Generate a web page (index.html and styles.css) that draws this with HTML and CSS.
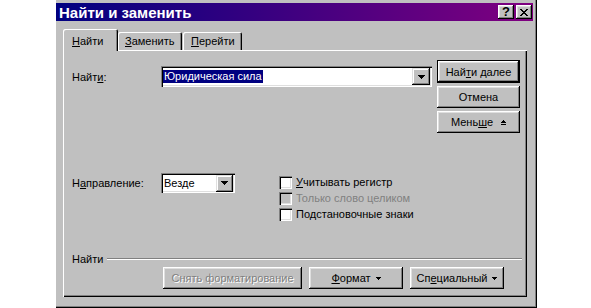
FILE: index.html
```html
<!DOCTYPE html>
<html lang="ru">
<head>
<meta charset="utf-8">
<title>Найти и заменить</title>
<link rel="stylesheet" href="styles.css">
</head>
<body>
<div class="window">
  <div class="titlebar">
    <span class="title">Найти и заменить</span>
    <div class="tb-btns">
      <span class="tb-btn help">?</span>
      <span class="tb-btn close"><svg width="8" height="7" viewBox="0 0 8 7"><path d="M0 0h2v1H0zM6 0h2v1H6zM1 1h2v1H1zM5 1h2v1H5zM2 2h4v1H2zM3 3h2v1H3zM2 4h4v1H2zM1 5h2v1H1zM5 5h2v1H5zM0 6h2v1H0zM6 6h2v1H6z" fill="#000"/></svg></span>
    </div>
  </div>
  <div class="tabs">
    <div class="tab active"><span class="u">Н</span>айти</div>
    <div class="tab t2"><span class="u">З</span>аменить</div>
    <div class="tab t3"><span class="u">П</span>ерейти</div>
  </div>
  <div class="panel">
    <div class="top">
      <div class="find-row">
        <span class="lbl">Найт<span class="u">и</span>:</span>
        <div class="combo">
          <span class="sel">Юридическая сила</span>
          <span class="drop wide"><svg width="7" height="4" viewBox="0 0 7 4"><path d="M0 0h7v1H0zM1 1h5v1H1zM2 2h3v1H2zM3 3h1v1H3z" fill="#000"/></svg></span>
        </div>
      </div>
      <div class="side">
        <div class="btn default">Най<span class="u">т</span>и далее</div>
        <div class="btn">Отмена</div>
        <div class="btn">Мень<span class="u">ш</span>е<svg class="less" width="5" height="5" viewBox="0 0 5 5"><path d="M2 0h1v1H2zM1 1h3v1H1zM0 2h5v1H0zM0 4h5v1H0z" fill="#000"/></svg></div>
      </div>
    </div>
    <div class="options">
      <div class="dir">
        <span class="lbl">Н<span class="u">а</span>правление:</span>
        <div class="select">
          <span>Везде</span>
          <span class="drop"><svg width="7" height="4" viewBox="0 0 7 4"><path d="M0 0h7v1H0zM1 1h5v1H1zM2 2h3v1H2zM3 3h1v1H3z" fill="#000"/></svg></span>
        </div>
      </div>
      <div class="checks">
        <div class="chk"><span class="box"></span><span><span class="u">У</span>читывать регистр</span></div>
        <div class="chk disabled"><span class="box"></span><span>Только слово целиком</span></div>
        <div class="chk"><span class="box"></span><span>По<span class="u">д</span>становочные знаки</span></div>
      </div>
    </div>
    <div class="group">
      <div class="sep"><span>Найти</span><span class="line"></span></div>
      <div class="row-btns">
        <div class="btn b-clear disabled">Снять форматирование</div>
        <div class="btn b-fmt"><span class="u">Ф</span>ормат<svg class="tri" width="5" height="3" viewBox="0 0 5 3"><path d="M0 0h5v1H0zM1 1h3v1H1zM2 2h1v1H2z" fill="#000"/></svg></div>
        <div class="btn b-spec">Сп<span class="u">е</span>циальный<svg class="tri" width="5" height="3" viewBox="0 0 5 3"><path d="M0 0h5v1H0zM1 1h3v1H1zM2 2h1v1H2z" fill="#000"/></svg></div>
      </div>
    </div>
  </div>
</div>
</body>
</html>
```
FILE: styles.css
```css
* { box-sizing: border-box; }
body {
  margin: 0;
  background: #fff;
  font: 11px "Liberation Sans", Arial, sans-serif;
  color: #000;
}
.u { text-decoration: underline; }
.window {
  margin-left: 56px;
  width: 481px;
  height: 308px;
  background: #c0c0c0;
  padding-top: 3px;
  box-shadow: inset -1px -1px #000, inset -2px -2px #808080;
}
.titlebar {
  width: 477px;
  height: 18px;
  background: linear-gradient(90deg, #000080, #800080);
  display: flex;
  align-items: center;
}
.title {
  flex: 1;
  color: #fff;
  font-weight: bold;
  font-size: 15px;
  padding-left: 3px;
  white-space: nowrap;
}
.tb-btns { display: flex; gap: 2px; margin-right: 1px; }
.tb-btn {
  width: 16px;
  height: 14px;
  background: #c0c0c0;
  box-shadow: inset -1px -1px #000, inset 1px 1px #fff, inset -2px -2px #808080, inset 2px 2px #dfdfdf;
  display: flex;
  align-items: center;
  justify-content: center;
}
.help { font-weight: bold; font-size: 13px; line-height: 14px; }
.tabs {
  display: flex;
  align-items: flex-end;
  height: 29px;
  padding-left: 7px;
}
.tab {
  height: 18px;
  padding: 3px 0 0 7px;
  background: #c0c0c0;
  box-shadow: inset 1px 1px #fff, inset -1px 0 #000, inset -2px 0 #808080;
  border-radius: 2px 2px 0 0;
  white-space: nowrap;
}
.tab.active {
  width: 55px;
  height: 22px;
  padding: 6px 0 0 9px;
  margin-bottom: -1px;
  position: relative;
  z-index: 1;
}
.t2 { width: 64px; }
.t3 { width: 59px; margin-left: 1px; padding-left: 8px; }
.panel {
  margin-left: 7px;
  width: 464px;
  height: 247px;
  box-shadow: inset 1px 1px #fff, inset -1px -1px #000, inset -2px -2px #808080;
  display: flex;
  flex-direction: column;
  padding: 10px 7px 8px 9px;
}
.top { display: flex; justify-content: space-between; }
.find-row { display: flex; align-items: center; margin-top: 6px; height: 21px; }
.lbl { width: 89px; white-space: nowrap; }
.combo, .select {
  background: #fff;
  box-shadow: inset 1px 1px #808080, inset 2px 2px #000, inset -1px -1px #fff, inset -2px -2px #dfdfdf;
  display: flex;
  align-items: center;
}
.combo { width: 271px; height: 21px; padding: 0 2px; }
.sel {
  background: #000080;
  color: #fff;
  line-height: 13px;
  padding: 0 1px;
}
.drop {
  margin-left: auto;
  width: 17px;
  height: 17px;
  background: #c0c0c0;
  box-shadow: inset -1px -1px #000, inset 1px 1px #dfdfdf, inset -2px -2px #808080, inset 2px 2px #fff;
  display: flex;
  align-items: center;
  justify-content: center;
}
.drop.wide { width: 18px; }
.drop svg { display: block; }
.side { display: flex; flex-direction: column; gap: 3px; width: 83px; }
.btn {
  height: 22px;
  background: #c0c0c0;
  box-shadow: inset -1px -1px #000, inset 1px 1px #fff, inset -2px -2px #808080, inset 2px 2px #dfdfdf;
  display: flex;
  align-items: center;
  justify-content: center;
  white-space: nowrap;
}
.btn.default {
  height: 23px;
  box-shadow: inset 0 0 0 1px #000, inset -2px -2px #000, inset 2px 2px #fff, inset -3px -3px #808080, inset 3px 3px #dfdfdf;
}
.less { margin-left: 8px; }
.tri { margin-left: 5px; }
.options { display: flex; margin-top: 40px; }
.dir { display: flex; align-items: center; height: 20px; }
.select { width: 74px; height: 20px; padding: 0 2px 0 3px; }
.checks { display: flex; flex-direction: column; margin-left: 44px; margin-top: 1px; }
.chk { display: flex; align-items: center; height: 16px; }
.box {
  width: 13px;
  height: 13px;
  margin-right: 4px;
  background: #fff;
  box-shadow: inset 1px 1px #808080, inset 2px 2px #000, inset -1px -1px #fff, inset -2px -2px #dfdfdf;
}
.chk.disabled { color: #808080; }
.chk.disabled .box { background: #c0c0c0; }
.group { margin-top: auto; }
.sep { display: flex; align-items: center; height: 12px; }
.line {
  flex: 1;
  height: 2px;
  border-top: 1px solid #808080;
  border-bottom: 1px solid #fff;
  margin: 0 -2px 0 4px;
}
.row-btns { display: flex; gap: 7px; margin-top: 2px; margin-left: 91px; }
.b-clear { width: 139px; }
.b-fmt { width: 94px; }
.b-spec { width: 94px; }
.btn.disabled { color: #808080; text-shadow: 1px 1px #fff; }
```
